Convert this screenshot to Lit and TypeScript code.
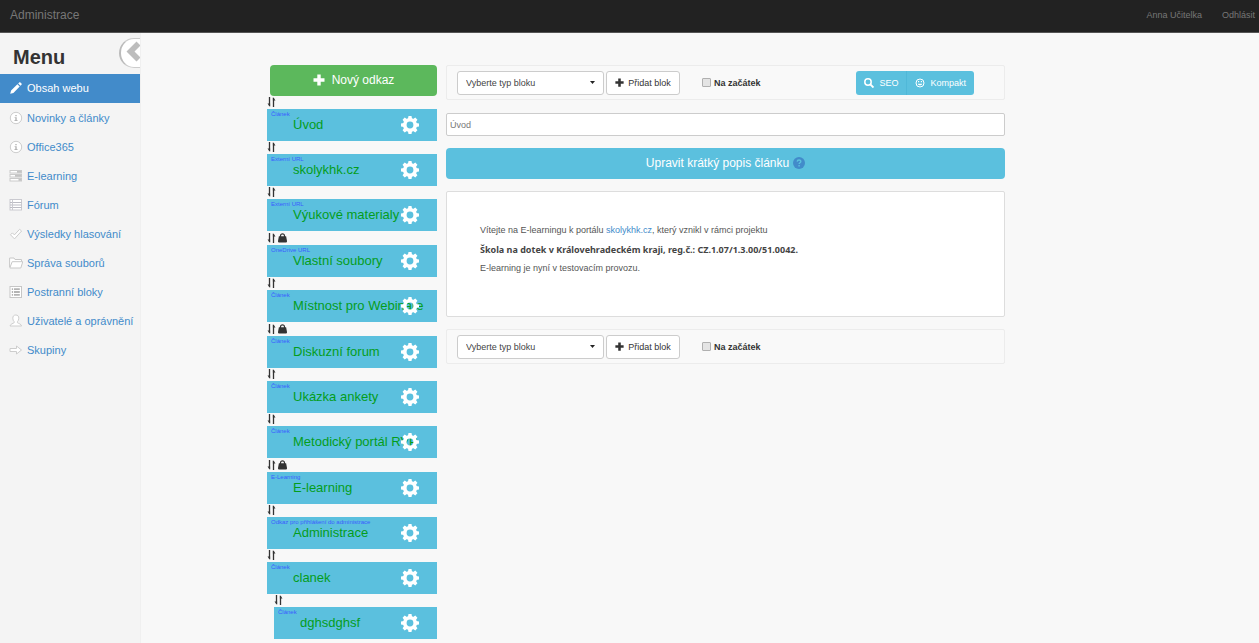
import { LitElement, html, svg, css, nothing } from "lit";
import { customElement, property } from "lit/decorators.js";

type Glyph = ReturnType<typeof svg>;

const menuGlyphs: Record<string, Glyph> = {
  pencil: svg`<path d="M1.200 12.800l.9-3.200 6.300-6.300 2.300 2.300-6.300 6.300zM9.200 2.500l1-1c.4-.4.800-.4 1.200 0l1.100 1.100c.4.4.4.8 0 1.200l-1 1z" fill="#fff"/>`,
  info: svg`<circle cx="7" cy="7" r="5.700" fill="#fff" stroke="#cdcdcd"/><path d="M6.300 4h1.400v1.200H6.300zM5.600 6.200h2.100v2.900h.8v.9h-3v-.9h.8v-2h-.7z" fill="#b4b4b4"/>`,
  tasks: svg`<g fill="#fff" stroke="#cacaca"><rect x="1" y="1.500" width="11.500" height="2.500"/><rect x="1" y="5.500" width="11.500" height="2.500"/><rect x="1" y="9.500" width="11.500" height="2.500"/></g><path d="M8 2.800h4M6 6.800h6M9.500 10.800H12" stroke="#b0b0b0" stroke-width="1.200"/>`,
  list: svg`<rect x="1" y="1.500" width="11.500" height="10.500" fill="#fff" stroke="#cacad0"/><path d="M1 4.500h11.500M1 7h11.500M1 9.500h11.500" stroke="#bcbcc4"/><path d="M3.500 1.500v10.500" stroke="#cacad0"/>`,
  check: svg`<path d="M1.500 7.800l1.900-1.900 2 2 5.200-5.600 2 1.700-7.100 7.900z" fill="#fff" stroke="#cdcdcd"/>`,
  folder: svg`<path d="M.6 11V2h4.400l1 1.500h6.500v2" fill="#fff" stroke="#c8c8c8"/><path d="M.8 12l2.400-6.300h10.600L11.800 12z" fill="#fff" stroke="#c8c8c8"/>`,
  block: svg`<rect x="1" y="1.500" width="11.500" height="11" fill="#fff" stroke="#c6c6c6"/><path d="M2.800 4.200h1.300M2.800 7h1.300M2.800 9.800h1.300M5 4.200h5.800M5 7h5.800M5 9.800h5.800" stroke="#b4b4b4" stroke-width="1.800"/>`,
  user: svg`<path d="M6.800 1c2 0 3 1.300 3 3.200 0 1.600-.6 2.800-1.400 3.500v1c.8.7 3.900 1.300 4.200 3.300H1c.3-2 3.400-2.600 4.200-3.300v-1c-.8-.7-1.400-1.900-1.400-3.500C3.800 2.300 4.800 1 6.800 1z" fill="#fff" stroke="#cecece"/>`,
  arrow: svg`<path d="M1 5.500h6.500V3l5 4-5 4V8.500H1z" fill="#fff" stroke="#cdcdcd"/>`,
};

const sortGlyph = html`<svg width="9" height="10" viewBox="0 0 9 10" aria-hidden="true"><path d="M2.500 0v9M6.500 1v9" stroke="#333" stroke-width="1.300"/><path d="M.500 6.500h2.600v3.400zM5.900 0L8.500 3.400H5.900z" fill="#333"/></svg>`;

const bagGlyph = html`<svg width="9" height="10" viewBox="0 0 9 10" aria-hidden="true"><path d="M2.500 4V2.800a2 2 0 0 1 4 0V4" fill="none" stroke="#333" stroke-width="1.200"/><path d="M.9 3.300h7.200L9 8c.1 1-.3 1.600-1 1.600H1C.3 9.600-.1 9 0 8z" fill="#333"/></svg>`;

const plusGlyph = (size: number) => html`<svg width=${size} height=${size} viewBox="0 0 12 12" aria-hidden="true"><path d="M4.300.500h3.400v3.800h3.800v3.400H7.700v3.800H4.300V7.700H.500V4.300h3.800z" fill="currentColor"/></svg>`;

const cogGlyph = html`<svg width="18" height="18" viewBox="-9 -9 18 18" aria-hidden="true"><circle r="5.200" fill="none" stroke="#fff" stroke-width="3.600"/>${[0, 45, 90, 135].map(
  (a) => svg`<path transform="rotate(${a})" d="M-1.500-9h3l.600 3h-4.200zM-1.500 9h3l.600-3h-4.200z" fill="#fff"/>`
)}</svg>`;

interface MenuItem { label: string; icon: string; active?: boolean }
interface Entry { type: string; title: string; locked?: boolean; nested?: boolean }

const menu: MenuItem[] = [
  { label: "Obsah webu", icon: "pencil", active: true },
  { label: "Novinky a články", icon: "info" },
  { label: "Office365", icon: "info" },
  { label: "E-learning", icon: "tasks" },
  { label: "Fórum", icon: "list" },
  { label: "Výsledky hlasování", icon: "check" },
  { label: "Správa souborů", icon: "folder" },
  { label: "Postranní bloky", icon: "block" },
  { label: "Uživatelé a oprávnění", icon: "user" },
  { label: "Skupiny", icon: "arrow" },
];

const entries: Entry[] = [
  { type: "Článek", title: "Úvod" },
  { type: "Externí URL", title: "skolykhk.cz" },
  { type: "Externí URL", title: "Výukové materialy" },
  { type: "OneDrive URL", title: "Vlastní soubory", locked: true },
  { type: "Článek", title: "Místnost pro Webináře" },
  { type: "Článek", title: "Diskuzní forum", locked: true },
  { type: "Článek", title: "Ukázka ankety" },
  { type: "Článek", title: "Metodický portál RVP" },
  { type: "E-Learning", title: "E-learning", locked: true },
  { type: "Odkaz pro přihlášení do administrace", title: "Administrace" },
  { type: "Článek", title: "clanek" },
  { type: "Článek", title: "dghsdghsf", nested: true },
];

const base = css`
  *, *::before, *::after { box-sizing: border-box; }
  button, input, select { font: inherit; color: inherit; margin: 0; }
  button { cursor: pointer; border: 0; padding: 0; background: none; }
  a { color: #428bca; text-decoration: none; }
  svg { display: block; flex: none; }
`;

@customElement("side-menu")
export class SideMenu extends LitElement {
  static styles = [base, css`
    :host { display: block; background: #f4f4f4; border-right: 1px solid #f0f0f0; overflow: hidden; }
    .head { display: flex; justify-content: space-between; height: 41px; padding: 5px 0 0 13px; }
    h1 { margin: 0; font-size: 20px; line-height: 38px; color: #333; }
    .toggle { display: flex; width: 21px; height: 30px; padding: 2px 0 0 5px; background: #fff; border: 1px solid #ccc; border-left: 2px solid #bbb; border-right: 0; border-radius: 15px 0 0 15px; overflow: hidden; }
    ul { list-style: none; margin: 0; padding: 0; display: grid; gap: 1px; }
    a { display: flex; align-items: center; gap: 4px; height: 28px; padding-left: 9px; font-size: 11px; white-space: nowrap; }
    .active { height: 29px; padding-bottom: 1px; background: #428bca; color: #fff; }
  `];
  render() {
    return html`
      <div class="head">
        <h1>Menu</h1>
        <button class="toggle" aria-label="Skrýt menu">
          <svg width="16" height="22" viewBox="0 0 16 22"><path d="M10.500.500l4 4L8.500 10.500l6 6-4 4L.500 10.500z" fill="#bdbdbd"/></svg>
        </button>
      </div>
      <nav><ul>${menu.map((m) => html`<li><a href="#" class=${m.active ? "active" : ""}>
        <svg width="14" height="14" viewBox="0 0 14 14" aria-hidden="true">${menuGlyphs[m.icon]}</svg>${m.label}</a></li>`)}</ul></nav>`;
  }
}

@customElement("link-list")
export class LinkList extends LitElement {
  static styles = [base, css`
    :host { display: block; font-size: 13px; }
    .new { display: flex; width: calc(100% - 3px); height: 31px; margin-left: 3px; padding-bottom: 1px; align-items: center; justify-content: center; gap: 7px; font-size: 12px; background: #5cb85c; color: #fff; border-radius: 4px; }
    ul { list-style: none; margin: 0; padding: 0; }
    .nested { margin-left: 7px; }
    .tools { display: flex; align-items: center; gap: 2px; height: 13px; padding-bottom: 1px; }
    .locked { height: 14px; }
    .card { display: grid; grid-template-rows: 8px 16px; height: 32px; background: #5bc0de; }
    .type { padding-left: 4px; font-size: 6px; line-height: 10px; color: #3a5cff; white-space: nowrap; }
    .row { display: flex; align-items: center; padding: 0 18px 0 26px; min-width: 0; }
    .title { flex: 1; min-width: 0; white-space: nowrap; line-height: 16px; color: #049d1c; }
    .cog { position: relative; flex: none; }
  `];
  render() {
    return html`
      <button class="new">${plusGlyph(12)}Nový odkaz</button>
      <ul>${entries.map((e) => html`<li class=${e.nested ? "nested" : ""}>
        <div class="tools ${e.locked ? "locked" : ""}">${sortGlyph}${e.locked ? bagGlyph : nothing}</div>
        <div class="card">
          <span class="type">${e.type}</span>
          <div class="row">
            <a class="title" href="#">${e.title}</a>
            <button class="cog" aria-label="Nastavení">${cogGlyph}</button>
          </div>
        </div></li>`)}</ul>`;
  }
}

@customElement("block-bar")
export class BlockBar extends LitElement {
  @property({ type: Boolean }) actions = false;
  static styles = [base, css`
    :host { display: block; font-size: 9px; }
    .bar { display: flex; align-items: center; height: 35px; padding: 0 30px 0 10px; border: 1px solid #ececec; border-radius: 2px; background: #f9f9f9; }
    .pick { display: grid; width: 147px; margin-right: 2px; }
    .pick > * { grid-area: 1 / 1; }
    select { appearance: none; height: 24px; padding: 0 8px; background: #fff; border: 1px solid #ccc; border-radius: 3px; color: #444; }
    .caret { justify-self: end; align-self: center; margin-right: 9px; pointer-events: none; }
    .add { display: flex; align-items: center; justify-content: center; gap: 4px; width: 74px; height: 24px; background: #fff; border: 1px solid #ccc; border-radius: 3px; color: #333; }
    label { display: flex; align-items: center; gap: 3px; margin-left: 22px; font-weight: bold; color: #333; }
    input { appearance: none; width: 9px; height: 9px; border: 1px solid #b0b0b0; border-radius: 1px; background: #e4e4e4; }
    .group { display: flex; margin-left: auto; height: 24px; background: #5bc0de; color: #fff; border-radius: 3px; overflow: hidden; }
    .group button { display: flex; align-items: center; gap: 5px; padding: 0 8px; }
    .group button + button { border-left: 1px solid #50b8d8; }
  `];
  render() {
    return html`<div class="bar">
      <div class="pick">
        <select aria-label="Typ bloku"><option>Vyberte typ bloku</option></select>
        <svg class="caret" width="5" height="3" viewBox="0 0 5 3"><path d="M0 0h5L2.500 3z" fill="#222"/></svg>
      </div>
      <button class="add">${plusGlyph(9)}Přidat blok</button>
      <label><input type="checkbox" />Na začátek</label>
      ${this.actions ? html`<div class="group">
        <button><svg width="10" height="10" viewBox="0 0 10 10"><circle cx="4" cy="4" r="3.200" fill="none" stroke="#fff" stroke-width="1.500"/><path d="M6.300 6.300l3.200 3.200" stroke="#fff" stroke-width="1.900"/></svg>SEO</button>
        <button><svg width="10" height="10" viewBox="0 0 10 10"><circle cx="5" cy="5" r="4" fill="none" stroke="#fff"/><path d="M2.700 5.800c.8 2 3.800 2 4.600 0z M3 3h1.200v1.300H3zM5.800 3H7v1.300H5.800z" fill="#fff"/></svg>Kompakt</button>
      </div>` : nothing}
    </div>`;
  }
}

@customElement("app-root")
export class AppRoot extends LitElement {
  static styles = [base, css`
    :host { display: grid; grid-template-rows: 33px 1fr; min-height: 100vh; background: #f8f8f8; font-family: "Liberation Sans", Arial, sans-serif; color: #333; }
    header { display: flex; align-items: center; justify-content: space-between; padding: 0 4px 2px 10px; background: #222; border-bottom: 1px solid #555; }
    header a { color: #777; font-size: 9px; }
    header .brand { font-size: 12px; }
    .account { display: flex; gap: 20px; }
    .body { display: grid; grid-template-columns: 141px 1fr; }
    .page { display: grid; grid-template-columns: 170px minmax(0, 559px); gap: 9px; align-items: start; padding: 32px 10px 0 126px; }
    main { display: grid; gap: 12px; }
    .name { width: 100%; height: 23px; margin-top: 1px; padding: 0 3px; font-size: 9px; color: #777; border: 1px solid #ccc; border-radius: 2px; background: #fff; }
    .wide { display: flex; align-items: center; justify-content: center; gap: 4px; height: 31px; padding-bottom: 2px; font-size: 12px; color: #fff; background: #5bc0de; border-radius: 4px; }
    .panel { padding: 29px 33px 38px; background: #fff; border: 1px solid #ddd; border-radius: 2px; font-size: 9px; line-height: 19px; color: #555; }
    .panel p { margin: 0; }
    .panel .strong { font-family: "Noto Sans", "Open Sans", sans-serif; font-weight: 700; color: #444; }
  `];
  render() {
    return html`
      <header>
        <a class="brand" href="#">Administrace</a>
        <div class="account"><a href="#">Anna Učitelka</a><a href="#">Odhlásit</a></div>
      </header>
      <div class="body">
        <side-menu></side-menu>
        <div class="page">
          <link-list></link-list>
          <main>
            <block-bar actions></block-bar>
            <input class="name" type="text" value="Úvod" aria-label="Název" />
            <button class="wide">Upravit krátký popis článku
              <svg width="12" height="12" viewBox="0 0 12 12" aria-hidden="true"><circle cx="6" cy="6" r="6" fill="#428bca"/><path d="M4.200 4.600c.1-2.200 3.700-2.100 3.600 0 0 1.200-1.700 1.200-1.700 2.500M6.100 8v1.400" fill="none" stroke="#5bc0de" stroke-width="1.400"/></svg>
            </button>
            <article class="panel">
              <p>Vítejte na E-learningu k portálu <a href="#">skolykhk.cz</a>, který vznikl v rámci projektu</p>
              <p class="strong">Škola na dotek v Královehradeckém kraji, reg.č.: CZ.1.07/1.3.00/51.0042.</p>
              <p>E-learning je nyní v testovacím provozu.</p>
            </article>
            <block-bar></block-bar>
          </main>
        </div>
      </div>`;
  }
}
